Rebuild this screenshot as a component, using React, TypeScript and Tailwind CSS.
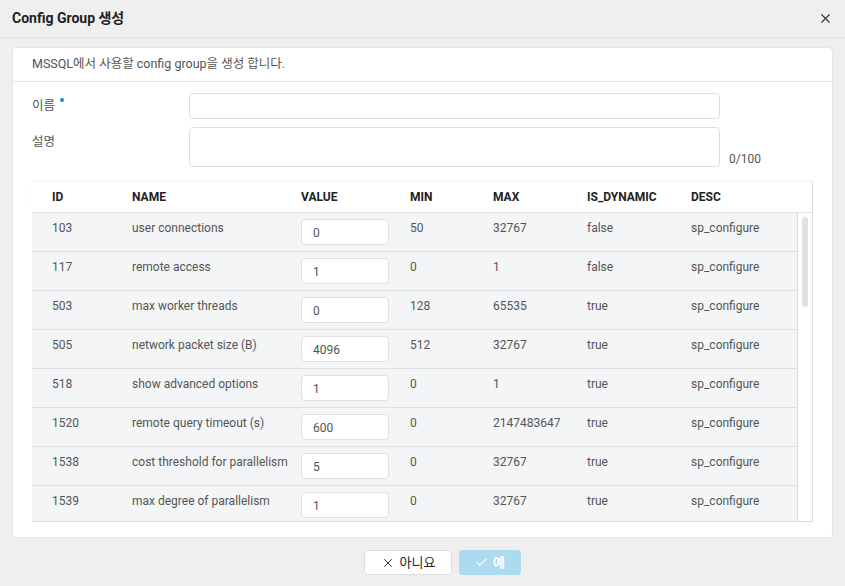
import React from 'react';
import { X, Check } from 'lucide-react';

const rows = [
  { id: '103', name: 'user connections', value: '0', min: '50', max: '32767', dyn: 'false', desc: 'sp_configure' },
  { id: '117', name: 'remote access', value: '1', min: '0', max: '1', dyn: 'false', desc: 'sp_configure' },
  { id: '503', name: 'max worker threads', value: '0', min: '128', max: '65535', dyn: 'true', desc: 'sp_configure' },
  { id: '505', name: 'network packet size (B)', value: '4096', min: '512', max: '32767', dyn: 'true', desc: 'sp_configure' },
  { id: '518', name: 'show advanced options', value: '1', min: '0', max: '1', dyn: 'true', desc: 'sp_configure' },
  { id: '1520', name: 'remote query timeout (s)', value: '600', min: '0', max: '2147483647', dyn: 'true', desc: 'sp_configure' },
  { id: '1538', name: 'cost threshold for parallelism', value: '5', min: '0', max: '32767', dyn: 'true', desc: 'sp_configure' },
  { id: '1539', name: 'max degree of parallelism', value: '1', min: '0', max: '32767', dyn: 'true', desc: 'sp_configure' },
];

const cols = 'grid grid-cols-[80px_169px_109px_83px_94px_104px_106px] pl-5';
const font = "font-['Roboto','Noto_Sans_CJK_KR',sans-serif]";

export default function App() {
  return (
    <div className={`w-[845px] h-[586px] bg-[#efefef] flex flex-col text-[12px] text-[#555] ${font}`}>
      <header className="h-[38px] flex items-center justify-between pl-3 pr-[12px] border-b border-[#e0e0e0] shrink-0">
        <h1 className="text-[14px] font-bold text-[#222]">Config Group 생성</h1>
        <X className="w-[15px] h-[15px] text-[#333]" strokeWidth={1.8} />
      </header>

      <div className="mx-3 mt-[9px] h-[491px] bg-white rounded border border-[#e6e6e6] flex flex-col">
        <div className="h-[34px] flex items-center px-[19px] border-b border-[#e4e4e4] shrink-0 text-[12.5px]">
          MSSQL에서 사용할 config group을 생성 합니다.
        </div>

        <div className="px-[19px] pt-[11px]">
          <div className="flex items-center h-[26px]">
            <label className="w-[157px] flex items-start gap-[5px] text-[12.5px]">
              이름
              <span className="w-[4px] h-[4px] rounded-full bg-[#1e88e5] mt-[1px]" />
            </label>
            <input className="w-[531px] h-[26px] border border-[#dedede] rounded-sm outline-none" />
          </div>
          <div className="flex items-start mt-[8px]">
            <label className="w-[157px] pt-[6px] text-[12.5px]">설명</label>
            <textarea className="w-[531px] h-[40px] border border-[#dedede] rounded-sm outline-none resize-none" />
            <span className="self-end ml-[9px] text-[#555] leading-4">0/100</span>
          </div>

          <div className="mt-[14px] w-[781px] border-b border-[#dcdcdc]">
            <div className="flex border-t border-[#f2f2f2] shadow-[0_-1px_2px_rgba(0,0,0,0.03)]">
              <div className={`${cols} h-[31px] items-center font-bold text-[#222] border-b border-[#e2e2e2] w-[765px]`}>
                <div>ID</div>
                <div>NAME</div>
                <div>VALUE</div>
                <div>MIN</div>
                <div>MAX</div>
                <div>IS_DYNAMIC</div>
                <div>DESC</div>
              </div>
              <div className="w-[16px] border-r border-[#dcdcdc] border-b border-b-[#e2e2e2]" />
            </div>
            <div className="flex h-[308px] overflow-hidden">
              <div className="w-[765px]">
                {rows.map((r) => (
                  <div key={r.id} className={`${cols} h-[39px] bg-[#f4f5f7] border-b border-[#e0e0e0] pt-[7px] leading-4`}>
                    <div>{r.id}</div>
                    <div>{r.name}</div>
                    <div>
                      <input
                        readOnly
                        value={r.value}
                        className="-mt-px w-[88px] h-[26px] bg-white border border-[#e0e0e0] rounded-sm px-[11px] pt-[2px] text-[12px] text-[#555] outline-none"
                      />
                    </div>
                    <div>{r.min}</div>
                    <div>{r.max}</div>
                    <div>{r.dyn}</div>
                    <div>{r.desc}</div>
                  </div>
                ))}
              </div>
              <div className="w-[16px] border-l border-r border-[#dcdcdc] pt-[4px] flex justify-center">
                <div className="w-[6px] h-[90px] rounded-full bg-[#e1e1e1]" />
              </div>
            </div>
          </div>
        </div>
      </div>

      <div className="flex justify-center gap-[7px] mt-[12px] pl-[40px]">
        <button className="w-[88px] h-[25px] bg-white border border-[#dddddd] rounded-sm flex items-center justify-center gap-[5px] text-[13px] text-[#222]">
          <X className="w-[14px] h-[14px]" strokeWidth={1.6} />
          아니요
        </button>
        <button className="w-[62px] h-[25px] bg-[#acdaee] rounded-sm flex items-center justify-center gap-[5px] text-[13px] font-bold text-white">
          <Check className="w-[13px] h-[13px]" strokeWidth={2} />
          예
        </button>
      </div>
    </div>
  );
}
